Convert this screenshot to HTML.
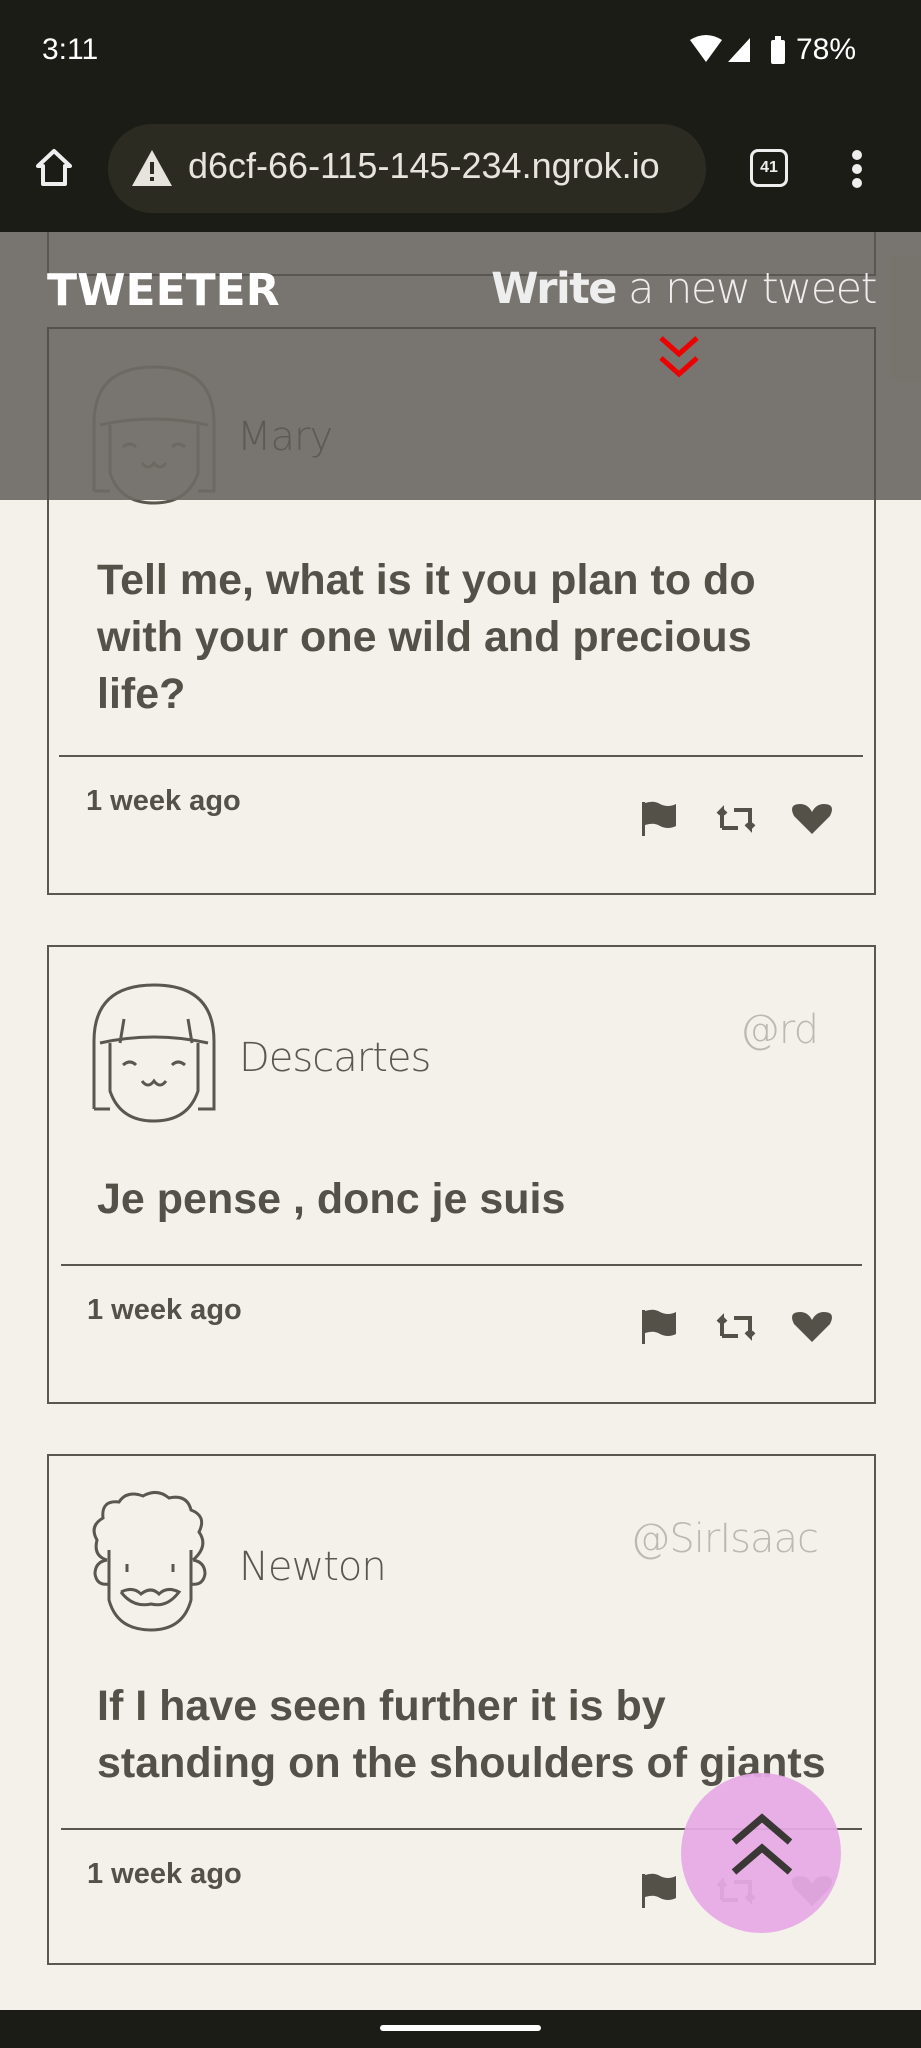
<!DOCTYPE html>
<html><head><meta charset="utf-8"><style>
*{margin:0;padding:0;box-sizing:border-box}
body{width:921px;height:2048px;background:#f4f1ea;font-family:"Liberation Sans",sans-serif;position:relative;overflow:hidden;color:#545149}
.abs{position:absolute}
.card{position:absolute;left:47px;width:829px;border:2px solid #5a5750;background:#f4f1ea}
.name{position:absolute;left:190px;font-size:40px;color:#5a5750;font-family:"DejaVu Sans","Liberation Sans",sans-serif;letter-spacing:-1px;font-weight:200}
.handle{position:absolute;right:56px;font-size:40px;color:#bdb9b2;font-family:"DejaVu Sans",sans-serif;font-weight:200;letter-spacing:-1px}
.quote{position:absolute;left:48px;width:740px;font-size:43px;font-weight:bold;line-height:57px;color:#545149}
.div{position:absolute;left:12px;right:12px;height:2px;background:#5a5750}
.time{position:absolute;left:38px;font-size:29px;font-weight:bold;color:#545149}
</style></head><body>
<div class="abs" style="left:0;top:0;width:921px;height:232px;background:#1c1c17"></div>
<div class="abs" style="left:42px;top:33px;color:#fff;font-size:30px">3:11</div>
<svg class="abs" style="left:690px;top:34px" width="170" height="34" viewBox="0 0 170 34">
<path d="M0 6 Q16 -4 32 6 L16 28Z" fill="#fff"/><path d="M38 28 L60 4 L60 28Z" fill="#fff"/>
<rect x="81" y="6" width="14" height="24" rx="2" fill="#fff"/><rect x="85" y="2" width="6" height="4" fill="#fff"/>
</svg>
<div class="abs" style="left:796px;top:33px;color:#fff;font-size:30px">78%</div>
<div class="abs" style="left:108px;top:124px;width:598px;height:89px;border-radius:44px;background:#2b2b21"></div>
<svg class="abs" style="left:32px;top:146px" width="44" height="44" viewBox="0 0 44 44"><path d="M6 20 L22 5 L38 20 L33 20 L33 38 L11 38 L11 20Z" fill="none" stroke="#eee" stroke-width="4" stroke-linejoin="round"/></svg>
<svg class="abs" style="left:130px;top:148px" width="44" height="40" viewBox="0 0 44 40"><path d="M22 2 L42 38 L2 38Z" fill="#e6e4dd"/><rect x="20" y="14" width="4" height="12" fill="#2b2b21"/><rect x="20" y="29" width="4" height="4" fill="#2b2b21"/></svg>
<div class="abs" style="left:188px;top:145px;color:#e6e4dd;font-size:36px">d6cf-66-115-145-234.ngrok.io</div>
<div class="abs" style="left:750px;top:149px;width:38px;height:38px;border:3px solid #eee;border-radius:8px;color:#eee;font-size:16px;font-weight:bold;text-align:center;line-height:32px">41</div>
<div class="abs" style="left:852px;top:150px;width:10px;height:10px;border-radius:5px;background:#eee;box-shadow:0 14px 0 #eee,0 28px 0 #eee"></div>

<div class="card" style="top:327px;height:568px">
<svg class="abs" style="left:41px;top:34px" width="128" height="144" viewBox="0 0 128 144"><g fill="none" stroke="#5a5750" stroke-width="3"><path d="M4 128 L4 60 Q4 4 64 4 Q124 4 124 60 L124 128 L108 128"/><path d="M20 128 L4 128"/><path d="M10 62 Q64 50 118 62"/><path d="M20 62 L20 110 Q30 140 64 140 Q98 140 108 110 L108 62"/><path d="M33 84 Q40 78 46 84 M82 84 Q88 78 95 84 M52 100 Q58 108 64 100 Q70 108 76 100"/></g></svg>
</div>
<div class="abs" style="left:0;top:232px;width:921px;height:268px;background:rgba(110,107,101,0.93)"></div>
<div class="abs" style="left:47px;top:232px;width:829px;height:44px;border:2px solid rgba(60,58,54,.5);border-top:none"></div>
<div class="abs" style="left:47px;top:327px;width:829px;height:173px;border:2px solid rgba(60,58,54,.5);border-bottom:none"></div>
<div class="abs" style="left:237px;top:414px;font-size:40px;color:rgba(60,58,54,.45);font-family:'DejaVu Sans',sans-serif;font-weight:200;letter-spacing:-1px">Mary</div>
<div class="abs" style="left:47px;top:265px;color:#fff;font-size:44px;font-weight:900;font-family:'DejaVu Sans',sans-serif;letter-spacing:0px">TWEETER</div>
<div class="abs" style="right:45px;top:264px;color:#eee;font-size:43px;font-family:'DejaVu Sans',sans-serif;letter-spacing:-1.5px"><b style="font-weight:bold">Write</b> <span style="font-weight:200">a new tweet</span></div>
<svg class="abs" style="left:657px;top:334px" width="44" height="48" viewBox="0 0 44 48"><path d="M4 4 L22 20 L40 4 M4 24 L22 40 L40 24" fill="none" stroke="#e00" stroke-width="5"/></svg>

<div class="abs quote" style="left:97px;top:552px;width:700px">Tell me, what is it you plan to do with your one wild and precious life?</div>
<div class="abs" style="left:59px;top:755px;width:804px;height:2px;background:#5a5750"></div>
<div class="abs time" style="left:86px;top:785px">1 week ago</div>

<div class="card" style="top:945px;height:459px">
<svg class="abs" style="left:41px;top:34px" width="128" height="144" viewBox="0 0 128 144"><g fill="none" stroke="#5a5750" stroke-width="3"><path d="M4 128 L4 60 Q4 4 64 4 Q124 4 124 60 L124 128 L108 128"/><path d="M20 128 L4 128"/><path d="M10 62 Q64 50 118 62"/><path d="M20 62 L20 110 Q30 140 64 140 Q98 140 108 110 L108 62"/><path d="M34 38 L30 62 M98 38 L102 62"/><path d="M33 84 Q40 78 46 84 M82 84 Q88 78 95 84 M52 100 Q58 108 64 100 Q70 108 76 100"/></g></svg>
<div class="name" style="top:88px">Descartes</div>
<div class="handle" style="top:60px">@rd</div>
<div class="quote" style="top:224px">Je pense , donc je suis</div>
<div class="div" style="top:317px"></div>
<div class="time" style="top:347px">1 week ago</div>
</div>

<div class="card" style="top:1454px;height:511px">
<svg class="abs" style="left:38px;top:34px" width="124" height="144" viewBox="0 0 124 144"><g fill="none" stroke="#5a5750" stroke-width="3"><path d="M20 70 Q6 66 10 50 Q2 36 16 28 Q14 10 32 12 Q40 0 56 6 Q70 -2 82 8 Q100 4 104 20 Q120 26 112 42 Q122 56 106 70"/><path d="M20 70 Q8 72 8 84 Q10 96 22 94 M106 70 Q118 72 118 84 Q116 96 104 94"/><path d="M22 60 L22 110 Q30 140 64 140 Q96 140 104 110 L104 60"/><path d="M40 74 L40 82 M86 74 L86 82 M34 102 Q46 96 54 104 Q64 96 72 104 Q80 96 92 102 Q80 118 64 114 Q46 118 34 102"/></g></svg>
<div class="name" style="top:88px">Newton</div>
<div class="handle" style="top:60px">@SirIsaac</div>
<div class="quote" style="top:222px">If I have seen further it is by standing on the shoulders of giants</div>
<div class="div" style="top:372px"></div>
<div class="time" style="top:402px">1 week ago</div>
</div>

<svg width="0" height="0" style="position:absolute"><defs>
<g id="ic" fill="#545149"><rect x="0" y="2" width="3" height="34"/><path d="M3 3 Q12 0 18 4 Q26 8 34 4 L34 26 Q26 30 18 26 Q12 22 3 25Z"/>
<path d="M80 28 L80 10 L76 14 M80 10 L84 14 M80 28 L96 28 M92 10 L108 10 L108 28 L104 24 M108 28 L112 24" fill="none" stroke="#545149" stroke-width="4"/>
<path d="M170 34 L152 16 Q146 4 158 4 Q166 4 170 12 Q174 4 182 4 Q194 4 188 16Z"/></g></defs></svg>
<svg class="abs" style="left:642px;top:800px" width="200" height="40"><use href="#ic"/></svg>
<svg class="abs" style="left:642px;top:1308px" width="200" height="40"><use href="#ic"/></svg>
<svg class="abs" style="left:642px;top:1872px" width="200" height="40"><use href="#ic"/></svg>

<div class="abs" style="left:681px;top:1773px;width:160px;height:160px;border-radius:80px;background:rgba(230,170,230,0.93)"></div>
<svg class="abs" style="left:730px;top:1812px" width="64" height="70" viewBox="0 0 64 70"><path d="M4 30 L32 6 L60 30 M4 60 L32 36 L60 60" fill="none" stroke="#3a3834" stroke-width="7"/></svg>

<div class="abs" style="left:0;top:2010px;width:921px;height:38px;background:#1c1c17"></div>
<div class="abs" style="left:380px;top:2025px;width:161px;height:6px;border-radius:3px;background:#fff"></div>
</body></html>
